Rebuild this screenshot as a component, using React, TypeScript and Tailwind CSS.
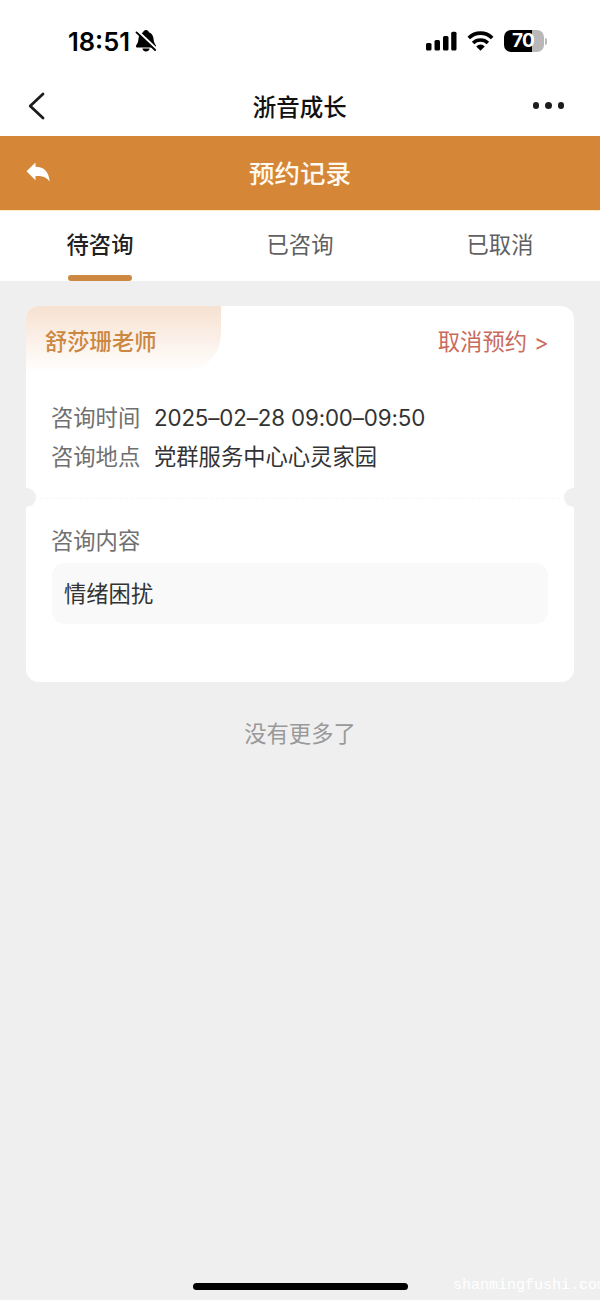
import clsx from 'clsx'

const TABS = ['待咨询', '已咨询', '已取消']

const DETAILS = [
  { label: '咨询时间', value: '2025–02–28 09:00–09:50' },
  { label: '咨询地点', value: '党群服务中心心灵家园' },
]

function StatusBar() {
  return (
    <div className="h-[78px] flex items-start justify-between pl-[68px] pr-[53px] pt-[25px]">
      <div className="flex items-center gap-[4px] h-8">
        <span className="text-[25.500px] leading-8 font-semibold w-[64px] whitespace-nowrap mt-px">
          18:51
        </span>
        <svg width="22" height="24" viewBox="0 0 22 24" className="-ml-[1px]">
          <path
            d="M11 1c1.600 0 2.600 1 2.800 2.200C17 4.200 18.400 7 18.600 10.500c.200 3.200 1.400 4.300 2.200 5.700 .600 1.100 0 2.400-1.100 2.400H2.300c-1.100 0-1.700-1.300-1.100-2.400 .900-1.400 2-2.500 2.200-5.700C3.600 7 5 4.200 8.200 3.200 8.400 2 9.400 1 11 1z"
            fill="#000"
          />
          <path d="M7.400 19.600h7.200c-.300 1.900-1.800 3-3.600 3s-3.300-1.100-3.600-3z" fill="#000" />
          <path d="M2.500 1.800l18.800 17.800" stroke="#fff" strokeWidth="2.200" />
          <path d="M1.500 3.400l18.600 17.600" stroke="#000" strokeWidth="1.900" strokeLinecap="round" />
        </svg>
      </div>

      <div className="flex items-center h-8">
        <svg width="32" height="20" viewBox="0 0 32 20">
          <rect x="0" y="12" width="5.500" height="7.500" rx="1.500" />
          <rect x="8.500" y="9" width="5.500" height="10.500" rx="1.500" />
          <rect x="17" y="5" width="5.500" height="14.500" rx="1.500" />
          <rect x="25.200" y="0.800" width="5.300" height="18.700" rx="1.500" />
        </svg>
        <svg width="28" height="20" viewBox="0 0 28 20" fill="none" stroke="#000" className="ml-[9px]">
          <path d="M1.800 7a16.700 16.700 0 0 1 23.400 0" strokeWidth="3.700" />
          <path d="M6.100 11.900a10.700 10.700 0 0 1 14.800 0" strokeWidth="3.500" />
          <path d="M13.500 19.700l-4.300-4.300a6 6 0 0 1 8.600 0z" fill="#000" stroke="none" />
        </svg>
        <div className="ml-[9px] w-[40px] h-[22px] rounded-[7px] overflow-hidden flex items-center justify-center bg-linear-to-r from-black from-70% to-[#b8b8b8] to-70% text-white text-[19px] font-bold tracking-[-0.9px]">
          <span className="-ml-[2px]">70</span>
        </div>
        <div className="ml-[1px] w-[2px] h-[7px] rounded-r-full bg-[#b8b8b8]" />
      </div>
    </div>
  )
}

function NavBar() {
  return (
    <div className="h-[58px] flex items-center justify-between pl-[28px] pr-[36px]">
      <svg width="18" height="28" viewBox="0 0 18 28" fill="none" className="-mt-[2px]">
        <path
          d="M15 2L2.200 14 15 26"
          stroke="#1c1c1c"
          strokeWidth="2.800"
          strokeLinecap="round"
          strokeLinejoin="round"
        />
      </svg>
      <h1 className="text-[23.500px] leading-8 font-medium text-[#111] ml-[21px] mt-[2px]">
        浙音成长
      </h1>
      <div className="flex gap-[6px] -mt-[3px]">
        <span className="size-[6.500px] rounded-full bg-[#1c1c1c]" />
        <span className="size-[6.500px] rounded-full bg-[#1c1c1c]" />
        <span className="size-[6.500px] rounded-full bg-[#1c1c1c]" />
      </div>
    </div>
  )
}

function PageHeader() {
  return (
    <header className="h-[75px] bg-[#d58637] border-b border-[#ffebc8] flex items-center pl-[26px] pr-[50px]">
      <svg width="24" height="20" viewBox="0 0 24 20" fill="#fff" className="-mt-[2px]">
        <path d="M0.500 9.200L9.500 0.500v4.200C18 4.600 22.700 9.500 23.700 19.500 20.500 15 16 13.600 9.500 14v4.300z" />
      </svg>
      <h2 className="flex-1 text-center text-[25.500px] leading-9 font-medium text-[#fffaf0] mt-px">
        预约记录
      </h2>
    </header>
  )
}

function Tabs() {
  return (
    <nav className="h-[70px] bg-white grid grid-cols-3">
      {TABS.map((tab, i) => (
        <div key={tab} className="flex flex-col items-center justify-between pt-[18px]">
          <span
            className={clsx(
              'text-[22.300px] leading-8',
              i === 0 ? 'font-medium text-[#222]' : 'text-[#606060]'
            )}
          >
            {tab}
          </span>
          {i === 0 && <span className="w-[64px] h-[6px] rounded-[3px] bg-[#cc8741]" />}
        </div>
      ))}
    </nav>
  )
}

function AppointmentCard() {
  return (
    <section className="mx-[26px] mt-[25px] h-[376px] bg-white rounded-[13px] relative">
      <div className="flex justify-between h-[66px]">
        <div className="w-[195px] pl-[19px] pt-[20px] rounded-tl-[13px] rounded-br-[38px] bg-linear-to-b from-[#f6e1d1] to-white">
          <span className="text-[22.300px] leading-8 font-medium text-[#cc8741]">舒莎珊老师</span>
        </div>
        <button className="flex gap-[7px] pr-[25px] pt-[20px] text-[22.300px] leading-8 text-[#c96b5c]">
          <span>取消预约</span>
          <span className="pt-px w-[15px]">&gt;</span>
        </button>
      </div>

      <div className="pl-[25px] pt-[30px] h-[126px]">
        {DETAILS.map((row) => (
          <div key={row.label} className="flex h-[39px] text-[22.300px] leading-8 whitespace-nowrap">
            <span className="w-[103px] text-[#707070]">{row.label}</span>
            <span className={clsx('text-[#333]', /^\d/.test(row.value) && 'tracking-[-0.13px]')}>
              {row.value}
            </span>
          </div>
        ))}
      </div>

      {/* ticket style tear line */}
      <div className="mx-[14px] border-t border-dashed border-[#f7f7f7]" />
      <span className="absolute -left-[9px] top-[182px] size-[19px] rounded-full bg-[#efefef]" />
      <span className="absolute -right-[9px] top-[182px] size-[19px] rounded-full bg-[#efefef]" />

      <div className="px-[26px] pt-[26px]">
        <p className="text-[22.300px] leading-8 text-[#707070] -ml-px">咨询内容</p>
        <div className="mt-[6px] h-[61px] rounded-[13px] bg-[#f9f9f9] pl-[12px] flex items-center text-[22.300px] text-[#333]">
          情绪困扰
        </div>
      </div>
    </section>
  )
}

export default function App() {
  return (
    <div className="w-[600px] h-[1301px] flex flex-col overflow-hidden relative bg-[#efefef] border-b border-white font-[Inter,'Noto_Sans_CJK_SC',sans-serif]">
      <div className="bg-white">
        <StatusBar />
        <NavBar />
      </div>
      <PageHeader />
      <Tabs />
      <AppointmentCard />
      <p className="mt-[36px] text-center text-[22.300px] leading-8 text-[#999]">没有更多了</p>

      <div className="mt-auto mb-[10px] mx-auto w-[215px] h-[7px] rounded-full bg-black" />
      <span className="absolute left-[453px] bottom-[4px] text-[15px] leading-5 text-white font-['Liberation_Mono',monospace]">
        shanmingfushi.com
      </span>
    </div>
  )
}
